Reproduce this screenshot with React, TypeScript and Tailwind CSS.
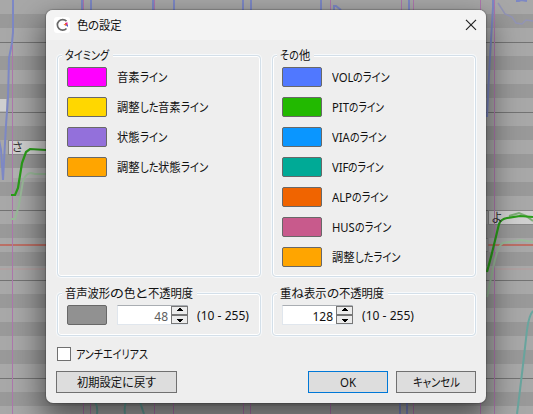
import { useLayoutEffect, useRef } from "react";

const FONT = "font-['Noto_Sans','Noto_Sans_CJK_JP',sans-serif]";

// Label with compact kana: kana runs are condensed so that the whole label takes `w` pixels.
function Label({ text, w }: { text: string; w: number }) {
  const ref = useRef<HTMLSpanElement>(null);
  const runs = text.match(/[\u3040-\u30ff]+|[^\u3040-\u30ff]+/g) ?? [];
  useLayoutEffect(() => {
    const spans = Array.from(ref.current?.children ?? []) as HTMLElement[];
    spans.forEach((s) => {
      s.style.width = "auto";
      s.style.transform = "none";
    });
    const widths = spans.map((s) => s.getBoundingClientRect().width);
    const isKana = runs.map((r) => /[\u3040-\u30ff]/.test(r));
    const kana = widths.reduce((a, v, i) => a + (isKana[i] ? v : 0), 0);
    const rest = widths.reduce((a, v, i) => a + (isKana[i] ? 0 : v), 0);
    const narrow = 0.94;
    const ratio = kana ? (w - rest * narrow) / kana : w / rest;
    spans.forEach((s, i) => {
      const r = kana && !isKana[i] ? narrow : ratio;
      s.style.width = `${widths[i] * r}px`;
      s.style.transform = `scaleX(${r})`;
    });
  });
  return (
    <span ref={ref} className="inline-flex shrink-0 whitespace-pre pt-[2px] leading-4">
      {runs.map((r, i) => (
        <span key={i} className="block shrink-0 origin-left [font-feature-settings:'palt']">
          {r}
        </span>
      ))}
    </span>
  );
}

function Group({ title, w, className, children }: { title: string; w: number; className: string; children: React.ReactNode }) {
  return (
    <fieldset className={`w-[204px] min-w-0 rounded-[4px] border border-[#d3dfe9] shadow-[inset_0_0_0_1px_#fff,0_0_0_1px_#f7f9fb] ${className}`}>
      <legend className="ml-1 flex h-4 items-center bg-[#eee] pl-[3px] pr-1">
        <Label text={title} w={w} />
      </legend>
      {children}
    </fieldset>
  );
}

function Swatch({ color }: { color: string }) {
  return <span className={`h-5 w-10 shrink-0 rounded-[2px] border border-[#686868] ${color}`} />;
}

function ColorRows({ rows }: { rows: [string, string, number][] }) {
  return (
    <div className="flex flex-col gap-[10px] pl-[9px] pt-[4px]">
      {rows.map(([color, text, w]) => (
        <div key={text} className="flex h-5 items-center gap-[10px]">
          <Swatch color={color} />
          <Label text={text} w={w} />
        </div>
      ))}
    </div>
  );
}

function Spinner({ value, muted }: { value: string; muted?: boolean }) {
  return (
    <div className="flex h-5 w-[71px] shrink-0 border border-[#e0e6ed] border-t-[#a9adb2] bg-white">
      <span className={`flex-1 pr-[3px] pt-px text-right leading-[20px] ${muted ? "text-[#606060]" : "text-[#111]"}`}>{value}</span>
      <span className="-mr-px flex w-[17px] flex-col">
        {["M7 1H9V2H10V3H11V4H5V3H6V2H7Z", "M5 3H11V4H10V5H9V6H7V5H6V4H5Z"].map((d) => (
          <span key={d} className="h-[9px] w-[17px] border border-[#777] bg-[#ececec]">
            <svg className="block" width="15" height="7" viewBox="0 0 15 7" shapeRendering="crispEdges">
              <path d={d} fill="#000" />
            </svg>
          </span>
        ))}
      </span>
    </div>
  );
}

function Button({ text, w, className }: { text: string; w: number; className: string }) {
  return (
    <button className={`flex h-[22px] items-center justify-center border bg-[#ddd] ${className}`}>
      <Label text={text} w={w} />
    </button>
  );
}

const BLACK_KEYS = [14, 56, 84, 126, 154, 182, 224, 252, 294, 322, 350, 392];
const OCTAVE_LINES = [42, 112, 210, 280, 378];

function PianoRoll() {
  return (
    <svg className="absolute inset-0" width="533" height="414" viewBox="0 0 533 414" fill="none">
      <rect width="533" height="414" fill="#a8a8a8" />
      {BLACK_KEYS.map((y) => (
        <rect key={y} y={y} width="533" height="14" fill="#999999" />
      ))}
      {OCTAVE_LINES.map((y) => (
        <rect key={y} y={y} width="533" height="1" fill="#737373" />
      ))}
      <rect y="268" width="533" height="2" fill="#b0a2a2" />
      <rect y="244" width="533" height="2" fill="#bb7066" />
      <rect x="-1" y="98.500" width="8" height="13.500" fill="#cfcfcf" stroke="#999" />
      <rect x="8.500" y="140.500" width="60" height="14" fill="#cfcfcf" stroke="#888" />
      <rect x="12" y="168" width="40" height="10" fill="#b2b2b2" />
      <rect x="488.500" y="210.500" width="60" height="14" fill="#d0d0d0" stroke="#888" />
      <rect x="470" y="238.500" width="18" height="13" fill="#b2b2b2" stroke="#888" />
      <g stroke="#7d88c5" strokeWidth="2">
        <path d="M13 0V32L12 43L9 58L8 98L6 125L3 180L1 150L-1 140" />
        <path d="M82 0V12M91 0V12M153 0V12M174 0V12M243 0V12M251 0V12M321 0V12M409 0V12M400 402V414M407 402V414" />
        <path d="M334 10V6L336 6L341 10M516 1h3l2-1 6 1" />
        <path d="M493 0V8L491 40L489 75L487 117" />
        <path d="M498 3L505 14L512 17L516 23L522 24L526 20L533 21" stroke="#9294b6" strokeWidth="1.500" />
      </g>
      <g stroke="#ae77ad" strokeWidth="1">
        <path d="M12.500 45V414M494.500 0V414" />
        <path d="M83.500 0V12M154.500 0V12M330.500 0V12M401.500 0V12M413.500 0V12M480.500 0V12" />
        <path d="M83.500 402V414M90.500 402V414M154.500 402V414M173.500 402V414M243.500 402V414M250.500 402V414M330.500 402V414M413.500 402V414M480.500 402V414" />
      </g>
      <g stroke="#69a59e" strokeWidth="2">
        <path d="M95 402q3 4 2 12M126 402q-2 5-1 12M140 402l4 12" />
        <path d="M533 311Q529 315 527 330Q522 375 517 414" />
      </g>
      <g stroke="#9aba9a" strokeWidth="2">
        <path d="M11 219h4L19 205L23 181Q26 173 31 173L35 174H46" />
        <path d="M487 297L494 264Q498 245 503 243L521 240L533 242" />
        <path d="M509 216L519 213L526 216L533 221" stroke="#7dac76" />
      </g>
      <g stroke="#2a9d19" strokeWidth="2.200">
        <path d="M11 195H15L18 188L22 163L26 152L30 149L46 150" />
        <path d="M487 272L492 253L499 224Q501 219 507 218L520 216L533 217" />
      </g>
      <text x="11.500" y="152" fill="#333" fontSize="12" fontFamily="Noto Sans CJK JP">さ</text>
      <text x="491" y="222" fill="#333" fontSize="12" fontFamily="Noto Sans CJK JP">よ</text>
    </svg>
  );
}

export default function App() {
  return (
    <div className={`relative h-[414px] w-[533px] overflow-hidden text-xs text-[#111] ${FONT}`}>
      <PianoRoll />
      <section className="absolute left-[46px] top-[10px] flex h-[393px] w-[440px] flex-col overflow-hidden rounded-[7px] bg-[#eee] shadow-[0_0_1px_1px_#00000030,0_14px_30px_4px_#00000080]">
        <header className="flex h-[30px] shrink-0 items-center bg-[#f3f3f3] pl-2 pr-[9px]">
          <svg className="mr-[7px]" width="16" height="16" viewBox="0 0 16 16">
            <rect width="16" height="16" rx="3" fill="#fff" />
            <path d="M12.500 4.200A5.300 5.300 0 1 0 12.500 11.500" fill="none" stroke="#686868" strokeWidth="1.700" />
            <path d="M11 6L13.500 5.200V8.500L11 7.500Z" fill="#e52783" />
            <path d="M9.500 7.500L12 6.500V9Z" fill="#f47c20" />
            <path d="M11.500 8L14 7.500V10Z" fill="#5461c9" />
          </svg>
          <Label text="色の設定" w={45} />
          <svg className="ml-auto" width="12" height="12" viewBox="0 0 12 12" stroke="#222" strokeWidth="1.200">
            <path d="M1 .800L11 10.800M11 .800L1 10.800" />
          </svg>
        </header>
        <div className="grid grid-cols-[204px_204px] gap-x-[11px] pl-[11px] pt-[7px]">
          <Group title="タイミング" w={44} className="h-[230px]">
            <ColorRows
              rows={[
                ["bg-[#ff00ff]", "音素ライン", 50],
                ["bg-[#ffd700]", "調整した音素ライン", 91],
                ["bg-[#9370db]", "状態ライン", 50],
                ["bg-[#ffa500]", "調整した状態ライン", 91],
              ]}
            />
          </Group>
          <Group title="その他" w={30} className="h-[230px]">
            <ColorRows
              rows={[
                ["bg-[#5078ff]", "VOLのライン", 58],
                ["bg-[#22b900]", "PITのライン", 52],
                ["bg-[#0a96ff]", "VIAのライン", 54],
                ["bg-[#00aa96]", "VIFのライン", 52],
                ["bg-[#f06400]", "ALPのライン", 56],
                ["bg-[#c85a8c]", "HUSのライン", 59],
                ["bg-[#ffa500]", "調整したライン", 68],
              ]}
            />
          </Group>
        </div>
        <div className="grid grid-cols-[204px_204px] gap-x-[11px] pl-[11px] pt-[8px]">
          <Group title="音声波形の色と不透明度" w={128} className="h-[51px]">
            <div className="flex items-center pl-[9px] pt-[4px]">
              <Swatch color="bg-[#919191]" />
              <span className="w-[10px]" />
              <Spinner value="48" muted />
              <span className="w-[9px]" />
              <Label text="(10 - 255)" w={52} />
            </div>
          </Group>
          <Group title="重ね表示の不透明度" w={104} className="h-[51px]">
            <div className="flex items-center pl-[9px] pt-[4px]">
              <Spinner value="128" />
              <span className="w-[9px]" />
              <Label text="(10 - 255)" w={52} />
            </div>
          </Group>
        </div>
        <div className="mt-[11px] flex h-[14px] items-center gap-[5px] pl-[11px]">
          <span className="size-[14px] border border-[#707070] bg-white" />
          <Label text="アンチエイリアス" w={72} />
        </div>
        <footer className="mt-[10px] flex pl-[10px]">
          <Button text="初期設定に戻す" w={79} className="w-[121px] border-[#707070]" />
          <Button text="OK" w={16} className="ml-[131px] w-[80px] border-[#0078d7]" />
          <Button text="キャンセル" w={47} className="ml-[8px] w-[80px] border-[#707070]" />
        </footer>
      </section>
    </div>
  );
}
